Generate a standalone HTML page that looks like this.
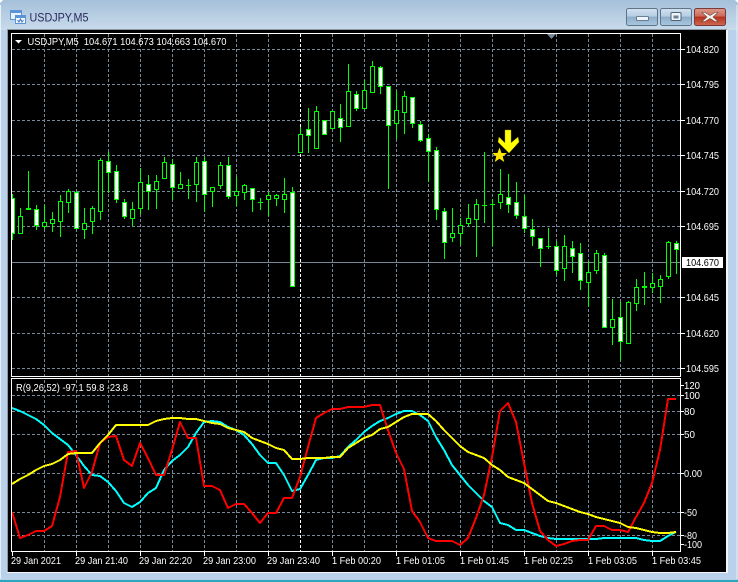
<!DOCTYPE html>
<html><head><meta charset="utf-8"><title>USDJPY,M5</title>
<style>html,body{margin:0;padding:0;background:#b9d1ea;width:738px;height:582px;overflow:hidden}svg{display:block}text{font-family:"Liberation Sans",sans-serif}</style></head>
<body>
<svg xmlns="http://www.w3.org/2000/svg" width="738" height="582" viewBox="0 0 738 582">
<defs>
<linearGradient id="t" x1="0" y1="0" x2="0" y2="1"><stop offset="0" stop-color="#a5c0da"/><stop offset="1" stop-color="#c8dbeb"/></linearGradient>
<linearGradient id="b" x1="0" y1="0" x2="0" y2="1"><stop offset="0" stop-color="#d3e2f0"/><stop offset=".45" stop-color="#b6cde3"/><stop offset=".5" stop-color="#8eadc9"/><stop offset="1" stop-color="#a9c7e0"/></linearGradient>
<linearGradient id="c" x1="0" y1="0" x2="0" y2="1"><stop offset="0" stop-color="#dc9a8c"/><stop offset=".45" stop-color="#cc6a58"/><stop offset=".5" stop-color="#b5301c"/><stop offset="1" stop-color="#cf6a50"/></linearGradient>
<clipPath id="m"><rect x="12" y="34" width="668" height="342"/></clipPath>
<clipPath id="s"><rect x="12" y="380" width="668" height="171"/></clipPath>
</defs>
<!-- window chrome -->
<rect width="738" height="582" fill="#b9d1ea"/>
<rect width="738" height="30" fill="url(#t)"/>
<path d="M0 0h3l-3 3zM738 0h-3l3 3z" fill="#fff"/>
<path d="M0.500 5V579M737 5V579" stroke="#e8f0f7" fill="none"/>
<rect x="0" y="580" width="738" height="2" fill="#2aa7bd"/>
<!-- title icon -->
<g shape-rendering="crispEdges">
<rect x="10.500" y="10.500" width="11" height="9" fill="#eaf3fb" stroke="#5c92d6"/><rect x="11" y="11" width="10" height="2" fill="#5c92d6"/>
<rect x="15.500" y="15.500" width="10" height="8" fill="#f4f9fd" stroke="#5c92d6"/><rect x="16" y="16" width="9" height="2" fill="#5c92d6"/>
</g>
<path d="M17.500 20l1.500 2 1.500-3 1.500 3 1.500-2" stroke="#3f76bf" fill="none"/>
<text x="29.500" y="21.500" font-size="12" fill="#2a2a5c" textLength="59" lengthAdjust="spacingAndGlyphs">USDJPY,M5</text>
<!-- buttons -->
<rect x="626.500" y="8.500" width="31" height="17" rx="2" fill="url(#b)" stroke="#5f7487"/>
<rect x="636.500" y="16.500" width="12" height="4" rx="1" fill="#eef4f9" stroke="#4d6478" stroke-width=".8"/>
<rect x="660.500" y="8.500" width="31" height="17" rx="2" fill="url(#b)" stroke="#5f7487"/>
<rect x="671" y="12.500" width="10" height="8" rx="1" fill="#eef4f9" stroke="#4d6478"/><rect x="673.500" y="15.500" width="5" height="3" fill="#6d8296"/>
<rect x="694.500" y="8.500" width="31" height="17" rx="2" fill="url(#c)" stroke="#7a3a3a"/>
<path d="M705 12.500l5 3 5-3h3l-5 4.500 5 4.500h-3l-5-3-5 3h-3l5-4.500-5-4.500z" fill="#f5f1ee" stroke="#6b4a46" stroke-width=".6"/>
<!-- client area -->
<rect x="7" y="29" width="720" height="1" fill="#8c98a4"/>
<rect x="7" y="29" width="1" height="544" fill="#8c98a4"/>
<rect x="8" y="30" width="718" height="542" fill="#000"/>
<rect x="7" y="572" width="720" height="1" fill="#f2f6fa"/>
<rect x="726" y="30" width="2" height="543" fill="#f2f6fa"/>
<!-- grid -->
<g shape-rendering="crispEdges" fill="none" stroke="#778899" stroke-dasharray="3 2">
<path d="M12 49.500H680M12 84.500H680M12 120.500H680M12 155.500H680M12 191.500H680M12 226.500H680M12 297.500H680M12 333.500H680M12 368.500H680"/>
<path d="M44.500 34V376M76.500 34V376M108.500 34V376M140.500 34V376M172.500 34V376M204.500 34V376M236.500 34V376M268.500 34V376M332.500 34V376M364.500 34V376M396.500 34V376M428.500 34V376M460.500 34V376M492.500 34V376M524.500 34V376M556.500 34V376M588.500 34V376M620.500 34V376M652.500 34V376"/>
<path d="M12 395.500H680M12 411.500H680M12 434.500H680M12 473.500H680M12 512.500H680M12 535.500H680"/>
<path d="M44.500 380V551M76.500 380V551M108.500 380V551M140.500 380V551M172.500 380V551M204.500 380V551M236.500 380V551M268.500 380V551M332.500 380V551M364.500 380V551M396.500 380V551M428.500 380V551M460.500 380V551M492.500 380V551M524.500 380V551M556.500 380V551M588.500 380V551M620.500 380V551M652.500 380V551"/>
<path d="M300.500 34V376M300.500 380V551" stroke="#fff"/>
<path d="M12 262.500H680" stroke-dasharray="none"/>
</g>
<!-- candles -->
<g clip-path="url(#m)" shape-rendering="crispEdges" stroke="#00ff00" fill="none">
<path d="M12.500 194V240M20.500 208V234M28.500 171V209M36.500 205V230M44.500 205V229M52.500 212V232M60.500 195V237M68.500 189V213M76.500 191V229M84.500 208V239M92.500 206V234M100.500 158V220M108.500 152V193M116.500 165V203M124.500 199V219M132.500 202V226M140.500 168V214M148.500 175V210M156.500 175V209M164.500 157V178M172.500 159V200M180.500 172V189M188.500 179V199M196.500 157V202M204.500 157V212M212.500 187V207M220.500 162V189M228.500 157V199M236.500 177V206M244.500 184V200M252.500 188V212M260.500 198V210M268.500 192V216M276.500 194V206M284.500 178V213M292.500 187V287M300.500 127V152M308.500 108V153M316.500 106V148M324.500 120V135M332.500 111V128M340.500 104V142M348.500 64V126M356.500 91V111M364.500 80V109M372.500 61V92M380.500 66V94M388.500 86V189M396.500 91V139M404.500 91V134M412.500 97V128M420.500 121V142M428.500 134V182M436.500 147V220M444.500 208V259M452.500 208V242M460.500 218V245M468.500 204V226M476.500 199V257M484.500 152V223M492.500 199V246M500.500 169V209M508.500 174V213M516.500 182V219M524.500 195V233M532.500 219V246M540.500 238V267M548.500 228V249M556.500 241V275M564.500 235V281M572.500 241V273M580.500 243V290M588.500 261V307M596.500 250V274M604.500 253V327M612.500 299V345M620.500 302V361M628.500 301V344M636.500 279V311M644.500 272V305M652.500 273V293M660.500 275V303M668.500 241V279M676.500 241V274"/>
<path d="M26 208.500h5M26 209.500h5M186 185.500h5M258 202.500h5M482 205.500h5M490 204.500h5M546 246.500h5M642 287.500h5M642 286.500h5"/>
<path fill="#000" d="M18.500 216.500h4v17h-4zM42.500 222.500h4v4h-4zM50.500 219.500h4v4h-4zM58.500 201.500h4v20h-4zM66.500 191.500h4v11h-4zM82.500 223.500h4v6h-4zM90.500 208.500h4v13h-4zM98.500 160.500h4v51h-4zM130.500 209.500h4v9h-4zM138.500 182.500h4v26h-4zM154.500 181.500h4v8h-4zM162.500 162.500h4v16h-4zM178.500 184.500h4v4h-4zM194.500 162.500h4v22h-4zM210.500 187.500h4v4h-4zM218.500 165.500h4v20h-4zM234.500 191.500h4v4h-4zM242.500 185.500h4v7h-4zM266.500 195.500h4v4h-4zM274.500 195.500h4v3h-4zM282.500 194.500h4v5h-4zM298.500 134.500h4v18h-4zM314.500 111.500h4v37h-4zM330.500 111.500h4v17h-4zM346.500 91.500h4v35h-4zM362.500 90.500h4v18h-4zM370.500 66.500h4v26h-4zM394.500 110.500h4v13h-4zM402.500 96.500h4v16h-4zM450.500 233.500h4v4h-4zM458.500 225.500h4v8h-4zM466.500 218.500h4v5h-4zM474.500 204.500h4v15h-4zM498.500 194.500h4v8h-4zM562.500 246.500h4v22h-4zM586.500 272.500h4v10h-4zM594.500 253.500h4v17h-4zM610.500 319.500h4v8h-4zM626.500 302.500h4v41h-4zM634.500 287.500h4v16h-4zM650.500 283.500h4v4h-4zM658.500 279.500h4v7h-4zM666.500 242.500h4v34h-4z"/>
<path fill="#fff" d="M10.500 198.500h4v35h-4zM34.500 209.500h4v16h-4zM74.500 192.500h4v36h-4zM106.500 161.500h4v11h-4zM114.500 171.500h4v28h-4zM122.500 202.500h4v14h-4zM146.500 184.500h4v7h-4zM170.500 164.500h4v23h-4zM202.500 161.500h4v33h-4zM226.500 165.500h4v31h-4zM250.500 188.500h4v11h-4zM290.500 192.500h4v94h-4zM306.500 129.500h4v6h-4zM322.500 120.500h4v14h-4zM338.500 118.500h4v9h-4zM354.500 94.500h4v14h-4zM378.500 67.500h4v19h-4zM386.500 86.500h4v39h-4zM410.500 97.500h4v26h-4zM418.500 124.500h4v16h-4zM426.500 138.500h4v13h-4zM434.500 150.500h4v59h-4zM442.500 211.500h4v31h-4zM506.500 197.500h4v7h-4zM514.500 202.500h4v13h-4zM522.500 216.500h4v12h-4zM530.500 229.500h4v7h-4zM538.500 238.500h4v10h-4zM554.500 246.500h4v24h-4zM570.500 248.500h4v8h-4zM578.500 253.500h4v27h-4zM602.500 255.500h4v72h-4zM618.500 317.500h4v24h-4zM674.500 243.500h4v6h-4z"/>
</g>
<!-- markers -->
<polygon points="505,130 511,130 511,143 518,137 519,142 509,153 498,142 499,137 505,143" fill="#ffff00" stroke="#a8a000" stroke-width=".4"/>
<polygon points="499.500,147.500 501.500,153 507,153 502.700,156.500 504.300,162 499.500,158.700 494.700,162 496.300,156.500 492,153 497.500,153" fill="#ffe600"/>
<!-- indicator lines -->
<g clip-path="url(#s)" fill="none" stroke-width="2" shape-rendering="crispEdges" stroke-linejoin="round">
<polyline stroke="#00ffff" points="12,408 20,411 28,415 36,419 44,425 52,433 60,439 68,445 76,455 84,466 92,475 100,476 108,482 116,491 124,503 132,507 140,502 148,493 156,488 164,470 172,461 180,455 188,447 196,433 204,422 212,421 220,422 228,427 236,430 244,435 252,444 260,455 268,463 276,463 284,475 292,491 300,489 308,475 316,460 324,458 332,458 340,456 348,447 356,440 364,432 372,426 380,421 388,418 396,414 404,411 412,411 420,415 428,421 436,437 444,450 452,465 460,475 468,485 476,493 484,501 492,507 500,523 508,525 516,530 524,530 532,533 540,536 548,538 556,539 564,539 572,539 580,539 588,539 596,539 604,538 612,538 620,538 628,538 636,538 644,540 652,541 660,541 668,536 676,532"/>
<polyline stroke="#ff0000" points="12,512 20,538 28,535 36,531 44,531 52,526 60,497 68,452 76,451 84,488 92,472 100,443 108,437 116,436 124,460 132,466 140,443 148,458 156,475 164,475 172,450 180,422 188,438 196,438 204,486 212,486 220,490 228,508 236,504 244,504 252,513 260,523 268,513 276,513 284,498 292,498 300,477 308,447 316,418 324,413 332,409 340,409 348,407 356,407 364,407 372,405 380,405 388,430 396,453 404,469 412,511 420,522 428,538 436,541 444,541 452,541 460,545 468,538 476,518 484,495 492,457 500,411 508,403 516,422 524,463 532,503 540,531 548,540 556,546 564,544 572,541 580,540 588,540 596,526 604,526 612,530 620,530 628,532 636,517 644,503 652,483 660,450 668,399 676,399"/>
<polyline stroke="#ffff00" points="12,484 20,479 28,475 36,470 44,466 52,464 60,460 68,454 76,453 84,453 92,453 100,443 108,435 116,425 124,425 132,425 140,425 148,425 156,421 164,419 172,418 180,418 188,419 196,419 204,421 212,423 220,424 228,428 236,430 244,432 252,438 260,441 268,444 276,448 284,450 292,459 300,459 308,458 316,458 324,458 332,457 340,457 348,448 356,443 364,438 372,435 380,429 388,427 396,422 404,417 412,414 420,414 428,414 436,421 444,430 452,438 460,446 468,452 476,455 484,458 492,465 500,470 508,477 516,480 524,483 532,489 540,495 548,501 556,503 564,506 572,509 580,512 588,514 596,517 604,519 612,521 620,523 628,527 636,528 644,530 652,532 660,533 668,533 676,532"/>
</g>
<!-- borders and ticks -->
<g shape-rendering="crispEdges" fill="none" stroke="#fff">
<rect x="11.500" y="33.500" width="669" height="343"/>
<rect x="11.500" y="378.500" width="669" height="173"/>
<path d="M681 49.500h4M681 84.500h4M681 120.500h4M681 155.500h4M681 191.500h4M681 226.500h4M681 297.500h4M681 333.500h4M681 368.500h4"/>
<path d="M681 385.500h3M681 395.500h3M681 411.500h3M681 434.500h3M681 473.500h3M681 512.500h3M681 535.500h3M681 544.500h3"/>
<path d="M12.500 552v4M76.500 552v4M140.500 552v4M204.500 552v4M268.500 552v4M332.500 552v4M396.500 552v4M460.500 552v4M524.500 552v4M588.500 552v4M652.500 552v4"/>
</g>
<polygon points="547,34 556,34 551.500,39" fill="#778899"/>
<polygon points="15,40 22,40 18.500,43.500" fill="#fff"/>
<!-- chart text -->
<g fill="#fff" font-size="10.500">
<text x="27.500" y="45" textLength="199" lengthAdjust="spacingAndGlyphs" xml:space="preserve">USDJPY,M5  104.671 104.673 104.663 104.670</text>
<text x="16" y="391" textLength="112" lengthAdjust="spacingAndGlyphs">R(9,26,52) -97.1 59.8 -23.8</text>
<text x="686" y="53" textLength="33" lengthAdjust="spacingAndGlyphs">104.820</text>
<text x="686" y="88" textLength="33" lengthAdjust="spacingAndGlyphs">104.795</text>
<text x="686" y="124" textLength="33" lengthAdjust="spacingAndGlyphs">104.770</text>
<text x="686" y="159" textLength="33" lengthAdjust="spacingAndGlyphs">104.745</text>
<text x="686" y="195" textLength="33" lengthAdjust="spacingAndGlyphs">104.720</text>
<text x="686" y="230" textLength="33" lengthAdjust="spacingAndGlyphs">104.695</text>
<text x="686" y="301" textLength="33" lengthAdjust="spacingAndGlyphs">104.645</text>
<text x="686" y="337" textLength="33" lengthAdjust="spacingAndGlyphs">104.620</text>
<text x="686" y="372" textLength="33" lengthAdjust="spacingAndGlyphs">104.595</text>
<text x="684" y="389" textLength="16" lengthAdjust="spacingAndGlyphs">120</text>
<text x="684" y="399" textLength="16" lengthAdjust="spacingAndGlyphs">100</text>
<text x="684" y="415" textLength="11" lengthAdjust="spacingAndGlyphs">80</text>
<text x="684" y="438" textLength="11" lengthAdjust="spacingAndGlyphs">50</text>
<text x="684" y="477" textLength="18" lengthAdjust="spacingAndGlyphs">0.00</text>
<text x="684" y="516" textLength="13" lengthAdjust="spacingAndGlyphs">-50</text>
<text x="684" y="539" textLength="13" lengthAdjust="spacingAndGlyphs">-80</text>
<text x="684" y="548" textLength="18" lengthAdjust="spacingAndGlyphs">-100</text>
<text x="11" y="564" textLength="50" lengthAdjust="spacingAndGlyphs">29 Jan 2021</text>
<text x="75" y="564" textLength="53" lengthAdjust="spacingAndGlyphs">29 Jan 21:40</text>
<text x="139" y="564" textLength="53" lengthAdjust="spacingAndGlyphs">29 Jan 22:20</text>
<text x="203" y="564" textLength="53" lengthAdjust="spacingAndGlyphs">29 Jan 23:00</text>
<text x="267" y="564" textLength="53" lengthAdjust="spacingAndGlyphs">29 Jan 23:40</text>
<text x="332" y="564" textLength="49" lengthAdjust="spacingAndGlyphs">1 Feb 00:20</text>
<text x="396" y="564" textLength="49" lengthAdjust="spacingAndGlyphs">1 Feb 01:05</text>
<text x="460" y="564" textLength="49" lengthAdjust="spacingAndGlyphs">1 Feb 01:45</text>
<text x="524" y="564" textLength="49" lengthAdjust="spacingAndGlyphs">1 Feb 02:25</text>
<text x="588" y="564" textLength="49" lengthAdjust="spacingAndGlyphs">1 Feb 03:05</text>
<text x="652" y="564" textLength="49" lengthAdjust="spacingAndGlyphs">1 Feb 03:45</text>
</g>
<rect x="682" y="257" width="41" height="11" fill="#fff"/>
<text x="686" y="266" font-size="10.500" fill="#000" textLength="33" lengthAdjust="spacingAndGlyphs">104.670</text>
</svg>
</body></html>
